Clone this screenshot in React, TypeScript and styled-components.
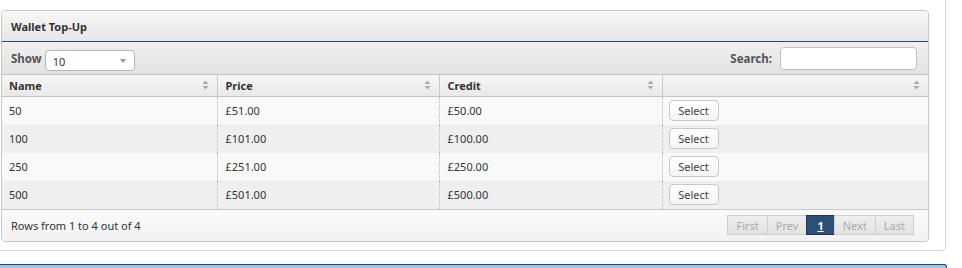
import styled, { createGlobalStyle } from "styled-components";

const GlobalStyle = createGlobalStyle`
  html, body {
    margin: 0;
    padding: 0;
    background: #ffffff;
    overflow: hidden;
  }
  body {
    font-family: "Noto Sans", "Open Sans", sans-serif;
    font-size: 11px;
    color: #333;
  }
`;

const Page = styled.div`
  width: 962px;
  height: 268px;
  overflow: hidden;
`;

const ContentPanel = styled.div`
  margin: -10px 0 0 -10px;
  width: 956px;
  box-sizing: border-box;
  padding: 19px 16px 8px 10px;
  border: 1px solid #d6d6d6;
  border-radius: 0 0 4px 4px;
  background: #fff;
`;

const NextPanel = styled.div`
  margin: 13px 0 0 -10px;
  width: 956px;
  height: 20px;
  border-top: 1px solid #2b4563;
  border-right: 1px solid #2b4563;
  border-radius: 0 3px 0 0;
  background: #9fc4ea;
`;

const Widget = styled.div`
  border: 1px solid #c8c8c8;
  border-radius: 4px;
  overflow: hidden;
  background: #fafafa;
`;

const WidgetHeader = styled.div`
  height: 30px;
  display: flex;
  align-items: center;
  padding-left: 9px;
  background: linear-gradient(#f7f7f7, #e6e6e6);
  border-bottom: 1px solid #2d4866;
  font-weight: 700;
  font-size: 11px;
  color: #333;
`;

const Toolbar = styled.div`
  height: 32px;
  display: flex;
  align-items: center;
  justify-content: space-between;
  padding: 0 11px 0 9px;
  background: linear-gradient(#efefef, #e3e3e3);
  border-bottom: 1px solid #c4c4c4;
`;

const ToolLabel = styled.label`
  display: flex;
  align-items: center;
  gap: 3px;
  font-weight: 700;
  font-size: 11.5px;
  color: #555;
`;

const SelectBox = styled.div`
  width: 90px;
  height: 21px;
  box-sizing: border-box;
  display: flex;
  align-items: center;
  justify-content: space-between;
  padding: 2px 8px 0 7px;
  border: 1px solid #b5b5b5;
  border-radius: 4px;
  background: #fff;
  font-weight: 400;
  color: #333;
  font-size: 11px;
  margin-top: 4px;
`;

const Caret = styled.span`
  width: 0;
  height: 0;
  border-left: 3px solid transparent;
  border-right: 3px solid transparent;
  border-top: 4px solid #999;
`;

const SearchInput = styled.input`
  width: 137px;
  height: 23px;
  box-sizing: border-box;
  border: 1px solid #c0c0c0;
  border-radius: 4px;
  background: #fff;
  margin-left: 5px;
`;

const Table = styled.table`
  width: 100%;
  border-collapse: collapse;
  table-layout: fixed;
`;

const HeadCell = styled.th<{ $w?: number }>`
  box-sizing: border-box;
  width: ${(p) => (p.$w ? `${p.$w}px` : "auto")};
  height: 21px;
  padding: 0 8px 0 8px;
  text-align: left;
  font-weight: 700;
  font-size: 11px;
  color: #333;
  background: linear-gradient(#f6f6f6, #e9e9e9);
  border-right: 1px solid #c8c8c8;
  border-bottom: 1px solid #c4c4c4;
  &:first-child {
    padding-left: 7px;
  }
  &:last-child {
    border-right: none;
  }
`;

const HeadInner = styled.div`
  display: flex;
  align-items: center;
  justify-content: space-between;
`;

const Row = styled.tr<{ $alt: boolean }>`
  background: ${(p) => (p.$alt ? "#efefef" : "#f9f9f9")};
`;

const Cell = styled.td`
  height: 28px;
  padding: 0 7px 0 8px;
  font-size: 11px;
  color: #333;
  border-right: 1px dotted #b8b8b8;
  &:first-child {
    padding-left: 7px;
  }
  &:last-child {
    border-right: none;
    padding-left: 6px;
  }
`;

const SelectButton = styled.button`
  width: 50px;
  height: 21px;
  padding: 0;
  border: 1px solid #c8c8c8;
  border-radius: 4px;
  background: linear-gradient(#ffffff, #f4f4f4);
  font-family: inherit;
  font-size: 11px;
  color: #444;
`;

const Footer = styled.div`
  height: 31px;
  display: flex;
  align-items: center;
  justify-content: space-between;
  padding: 0 14px 0 9px;
  border-top: 1px solid #c8c8c8;
  background: linear-gradient(#fbfbfb, #f2f2f2);
  color: #333;
`;

const Pager = styled.div`
  display: flex;
`;

const PageButton = styled.span<{ $active?: boolean }>`
  height: 20px;
  box-sizing: border-box;
  display: flex;
  align-items: center;
  padding: 0 ${(p) => (p.$active ? "10px" : "8px")};
  border: 1px solid ${(p) => (p.$active ? "#1f3650" : "#cfcfcf")};
  margin-left: -1px;
  background: ${(p) => (p.$active ? "#2c4f76" : "linear-gradient(#eeeeee, #e2e2e2)")};
  color: ${(p) => (p.$active ? "#fff" : "#aaa")};
  font-weight: ${(p) => (p.$active ? 700 : 400)};
  text-decoration: ${(p) => (p.$active ? "underline" : "none")};
  font-size: 11px;
`;

function SortIcon() {
  return (
    <svg width="7" height="10" viewBox="0 0 7 10">
      <path d="M3.5 0.5 L6.5 4 L0.5 4 Z" fill="#aaa" />
      <path d="M3.5 9.5 L6.5 6 L0.5 6 Z" fill="#aaa" />
    </svg>
  );
}

const rows = [
  { name: "50", price: "£51.00", credit: "£50.00" },
  { name: "100", price: "£101.00", credit: "£100.00" },
  { name: "250", price: "£251.00", credit: "£250.00" },
  { name: "500", price: "£501.00", credit: "£500.00" },
];

export default function App() {
  return (
    <>
      <GlobalStyle />
      <Page>
        <ContentPanel>
          <Widget>
            <WidgetHeader>Wallet Top-Up</WidgetHeader>
            <Toolbar>
              <ToolLabel>
                Show
                <SelectBox>
                  10
                  <Caret />
                </SelectBox>
              </ToolLabel>
              <ToolLabel>
                Search:
                <SearchInput type="text" />
              </ToolLabel>
            </Toolbar>
            <Table>
              <thead>
                <tr>
                  <HeadCell $w={215}>
                    <HeadInner>
                      Name <SortIcon />
                    </HeadInner>
                  </HeadCell>
                  <HeadCell $w={222}>
                    <HeadInner>
                      Price <SortIcon />
                    </HeadInner>
                  </HeadCell>
                  <HeadCell $w={223}>
                    <HeadInner>
                      Credit <SortIcon />
                    </HeadInner>
                  </HeadCell>
                  <HeadCell>
                    <HeadInner>
                      <span />
                      <SortIcon />
                    </HeadInner>
                  </HeadCell>
                </tr>
              </thead>
              <tbody>
                {rows.map((r, i) => (
                  <Row key={r.name} $alt={i % 2 === 1}>
                    <Cell>{r.name}</Cell>
                    <Cell>{r.price}</Cell>
                    <Cell>{r.credit}</Cell>
                    <Cell>
                      <SelectButton>Select</SelectButton>
                    </Cell>
                  </Row>
                ))}
              </tbody>
            </Table>
            <Footer>
              <span>Rows from 1 to 4 out of 4</span>
              <Pager>
                <PageButton>First</PageButton>
                <PageButton>Prev</PageButton>
                <PageButton $active>1</PageButton>
                <PageButton>Next</PageButton>
                <PageButton>Last</PageButton>
              </Pager>
            </Footer>
          </Widget>
        </ContentPanel>
        <NextPanel />
      </Page>
    </>
  );
}
